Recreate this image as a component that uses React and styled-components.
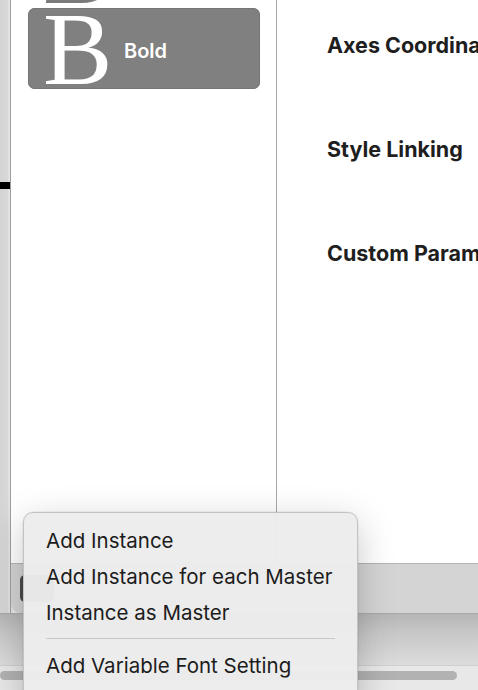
import styled, { createGlobalStyle } from "styled-components";

const GlobalStyle = createGlobalStyle`
  *, *::before, *::after {
    box-sizing: border-box;
  }
  html, body {
    margin: 0;
    padding: 0;
    width: 478px;
    height: 690px;
    overflow: hidden;
    background: #e6e6e6;
    font-family: Inter, "Liberation Sans", sans-serif;
  }
`;

const Page = styled.div`
  position: relative;
  width: 478px;
  height: 690px;
  display: flex;
  flex-direction: column;
  overflow: hidden;
`;

const TopRow = styled.div`
  display: flex;
  height: 613px;
`;

const LeftStrip = styled.div`
  width: 11px;
  flex-shrink: 0;
  background: linear-gradient(90deg, #d4d4d4 0, #d8d8d8 8px, #e6e6e6 9px);
  border-right: 1px solid #9c9c9c;
  padding-top: 182px;
`;

const StripMark = styled.div`
  height: 7px;
  background: #000;
`;

const Frame = styled.div`
  flex: 1;
  display: flex;
  flex-direction: column;
  min-width: 0;
  border-bottom-left-radius: 10px;
  overflow: hidden;
  background: #d4d4d4;
`;

const Content = styled.div`
  display: flex;
  height: 563px;
  background: #fff;
`;

const Sidebar = styled.div`
  width: 266px;
  flex-shrink: 0;
  border-right: 1px solid #a8a8a8;
  overflow: hidden;
  padding: 0 16px 0 17px;
`;

const MasterList = styled.div`
  margin-top: -73px;
  display: flex;
  flex-direction: column;
`;

const MasterItem = styled.div`
  height: 81px;
  display: flex;
  align-items: center;
  gap: 12px;
  padding-left: 15px;
  border-radius: 7px;
  background: ${(p) => (p.$selected ? "#808080" : "transparent")};
  box-shadow: ${(p) => (p.$selected ? "inset 0 0 0 1px #767676" : "none")};
  color: ${(p) => (p.$selected ? "#fff" : "#7a7a7a")};
`;

const Glyph = styled.span`
  font-family: "Liberation Serif", "Times New Roman", serif;
  font-size: 104px;
  line-height: 81px;
  height: 81px;
  width: 69px;
  flex-shrink: 0;
`;

const MasterName = styled.span`
  font-size: 20px;
  font-weight: 600;
  margin-top: 4px;
`;

const Main = styled.div`
  flex: 1;
  min-width: 0;
  overflow: hidden;
  padding: 33px 0 0 50px;
  display: flex;
  flex-direction: column;
  gap: 79px;
`;

const SectionTitle = styled.h2`
  margin: 0;
  font-size: 21.5px;
  line-height: 25px;
  font-weight: 700;
  color: #1e1e1e;
  white-space: nowrap;
`;

const BottomBar = styled.div`
  height: 50px;
  border-top: 1px solid #b4b4b4;
  background: #d4d4d4;
  display: flex;
  align-items: center;
  padding-left: 9px;
`;

const BarButton = styled.div`
  width: 34px;
  height: 27px;
  border-radius: 5px;
  background: #4a4a4a;
`;

const Shelf = styled.div`
  height: 52px;
  border-top: 1px solid #a9a9a9;
  background: linear-gradient(180deg, #b6b6b6 0, #c8c8c8 20px, #dcdcdc 100%);
`;

const ScrollTrack = styled.div`
  flex: 1;
  border-top: 1px solid #cfcfcf;
  background: #e8e8e8;
  padding: 5px 21px 0 0;
`;

const ScrollThumb = styled.div`
  height: 9px;
  border-radius: 5px;
  background: #b2b2b2;
`;

const Menu = styled.div`
  position: absolute;
  left: 23px;
  top: 512px;
  width: 335px;
  height: 200px;
  padding: 9px 0 0;
  background: rgba(236, 236, 236, 0.97);
  border: 1px solid #c3c3c3;
  border-radius: 10px;
  box-shadow: 0 10px 36px rgba(0, 0, 0, 0.22), 0 0 0 0.5px rgba(0, 0, 0, 0.08);
  display: flex;
  flex-direction: column;
`;

const MenuItem = styled.div`
  height: 36px;
  display: flex;
  align-items: center;
  padding-left: 22px;
  font-size: 20.5px;
  color: #1c1c1c;
  white-space: nowrap;
`;

const MenuSeparator = styled.div`
  height: 17px;
  display: flex;
  align-items: center;
  padding: 0 22px 0 22px;

  &::after {
    content: "";
    flex: 1;
    height: 1px;
    background: #c9c9c9;
  }
`;

const masters = [
  { glyph: "B", name: "Regular" },
  { glyph: "B", name: "Bold", selected: true },
];

export default function App() {
  return (
    <>
      <GlobalStyle />
      <Page>
        <TopRow>
          <LeftStrip>
            <StripMark />
          </LeftStrip>
          <Frame>
            <Content>
              <Sidebar>
                <MasterList>
                  {masters.map((m) => (
                    <MasterItem key={m.name} $selected={m.selected}>
                      <Glyph>{m.glyph}</Glyph>
                      <MasterName>{m.name}</MasterName>
                    </MasterItem>
                  ))}
                </MasterList>
              </Sidebar>
              <Main>
                <SectionTitle>Axes Coordinates</SectionTitle>
                <SectionTitle>Style Linking</SectionTitle>
                <SectionTitle>Custom Parameters</SectionTitle>
              </Main>
            </Content>
            <BottomBar>
              <BarButton />
            </BottomBar>
          </Frame>
        </TopRow>
        <Shelf />
        <ScrollTrack>
          <ScrollThumb />
        </ScrollTrack>
        <Menu>
          <MenuItem>Add Instance</MenuItem>
          <MenuItem>Add Instance for each Master</MenuItem>
          <MenuItem>Instance as Master</MenuItem>
          <MenuSeparator />
          <MenuItem>Add Variable Font Setting</MenuItem>
        </Menu>
      </Page>
    </>
  );
}
